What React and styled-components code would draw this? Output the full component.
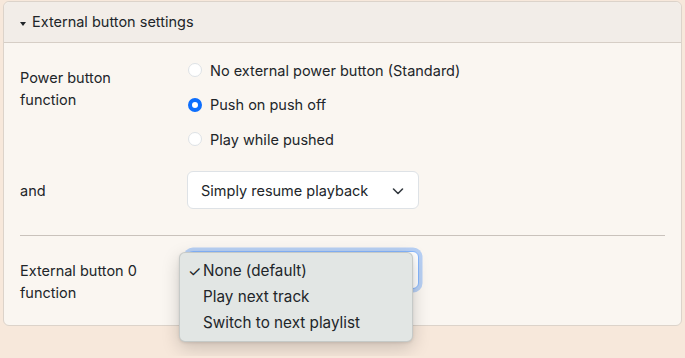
import React from "react";
import styled, { createGlobalStyle } from "styled-components";

const GlobalStyle = createGlobalStyle`
    body {
        margin: 0;
        background: #f7e8db;
        font-family: Inter, "Noto Sans", sans-serif;
        font-size: 14.5px;
        color: #212529;
    }
`;

const powerOptions = [
    { label: "No external power button (Standard)", checked: false },
    { label: "Push on push off", checked: true },
    { label: "Play while pushed", checked: false },
];

const buttonOptions = ["None (default)", "Play next track", "Switch to next playlist"];

export default function App() {
    return (
        <Page>
            <GlobalStyle />
            <Card>
                <CardHeader>
                    <Caret />
                    External button settings
                </CardHeader>
                <CardBody>
                    <FormRow $mb={20}>
                        <FieldLabel>Power button function</FieldLabel>
                        <RadioList>
                            {powerOptions.map((o) => (
                                <RadioOption key={o.label}>
                                    <Radio $checked={o.checked} />
                                    {o.label}
                                </RadioOption>
                            ))}
                        </RadioList>
                    </FormRow>
                    <FormRow $mb={26}>
                        <FieldLabel>and</FieldLabel>
                        <div>
                            <SelectBox>
                                Simply resume playback
                                <Chevron />
                            </SelectBox>
                        </div>
                    </FormRow>
                    <Divider />
                    <FormRow $mb={0}>
                        <FieldLabel>External button 0 function</FieldLabel>
                        <SelectWrap>
                            {/* value is covered by the open popup */}
                            <SelectBox $focused>
                                <HiddenValue>None (default)</HiddenValue>
                                <Chevron />
                            </SelectBox>
                            <PopupMenu>
                                {buttonOptions.map((o, i) => (
                                    <MenuItem key={o}>
                                        {i === 0 && <Check>✓</Check>}
                                        {o}
                                    </MenuItem>
                                ))}
                            </PopupMenu>
                        </SelectWrap>
                    </FormRow>
                </CardBody>
            </Card>
        </Page>
    );
}

function Chevron() {
    return (
        <ChevronSvg viewBox="0 0 16 16" width="16" height="16">
            <path d="m3.5 6 4.5 4.5 4.5-4.5" fill="none" stroke="#343a40" strokeWidth="1.6" strokeLinecap="round" strokeLinejoin="round" />
        </ChevronSvg>
    );
}

const Page = styled.div`
    padding: 1px 3px 30px;
`;

const Card = styled.div`
    background: #faf6f1;
    border: 1px solid #dcd3ca;
    border-radius: 6px;
`;

const CardHeader = styled.div`
    display: flex;
    align-items: center;
    height: 40px;
    padding: 0 16px;
    background: #f2ede8;
    border-bottom: 1px solid #d6cec6;
    border-radius: 6px 6px 0 0;
    line-height: 22px;
`;

const Caret = styled.span`
    width: 0;
    height: 0;
    margin: 4px 6px 0 0;
    border-top: 4px solid #212529;
    border-left: 3.5px solid transparent;
    border-right: 3.5px solid transparent;
`;

const CardBody = styled.div`
    padding: 15px 16px 14px;
`;

const FormRow = styled.div`
    display: grid;
    grid-template-columns: 143px 1fr;
    column-gap: 24px;
    margin-bottom: ${(p) => p.$mb}px;
`;

const FieldLabel = styled.div`
    padding: 9px 0 7px;
    line-height: 22px;
`;

const RadioList = styled.div`
    display: flex;
    flex-direction: column;
    gap: 10.5px;
`;

const RadioOption = styled.label`
    display: flex;
    align-items: center;
    gap: 8px;
    height: 24px;
    padding-left: 1px;

    & > span + * {
        margin-top: 1px;
    }
`;

const Radio = styled.span`
    box-sizing: border-box;
    width: 14px;
    height: 14px;
    border-radius: 50%;
    background: #fff;
    border: ${(p) => (p.$checked ? "4px solid #0d6efd" : "1px solid #dee2e6")};
`;

const Divider = styled.hr`
    margin: 0 0 15px;
    border: 0;
    border-top: 1px solid #c9c2bc;
`;

const SelectWrap = styled.div`
    position: relative;
`;

const SelectBox = styled.div`
    box-sizing: border-box;
    display: flex;
    align-items: center;
    justify-content: space-between;
    width: 232px;
    height: 38px;
    padding: 1px 12px 0 13px;
    background: #fff;
    border: 1px solid ${(p) => (p.$focused ? "#86b7fe" : "#dee2e6")};
    border-radius: 6px;
    line-height: 22px;
    box-shadow: ${(p) => (p.$focused ? "0 0 0 3.5px rgba(13,110,253,0.28)" : "none")};
`;

const HiddenValue = styled.span`
    visibility: hidden;
`;

const ChevronSvg = styled.svg`
    display: block;
`;

const PopupMenu = styled.div`
    position: absolute;
    left: -8px;
    top: 1px;
    width: 234px;
    box-sizing: border-box;
    padding: 5px 0;
    background: #e2e6e4;
    border: 1px solid rgba(0, 0, 0, 0.12);
    border-radius: 6px;
    box-shadow: 0 6px 18px rgba(0, 0, 0, 0.18), 0 1px 3px rgba(0, 0, 0, 0.1);
`;

const MenuItem = styled.div`
    position: relative;
    padding-left: 23px;
    line-height: 26px;
    font-size: 15.25px;
`;

const Check = styled.span`
    position: absolute;
    left: 8px;
    top: 1px;
    font-size: 15px;
`;
